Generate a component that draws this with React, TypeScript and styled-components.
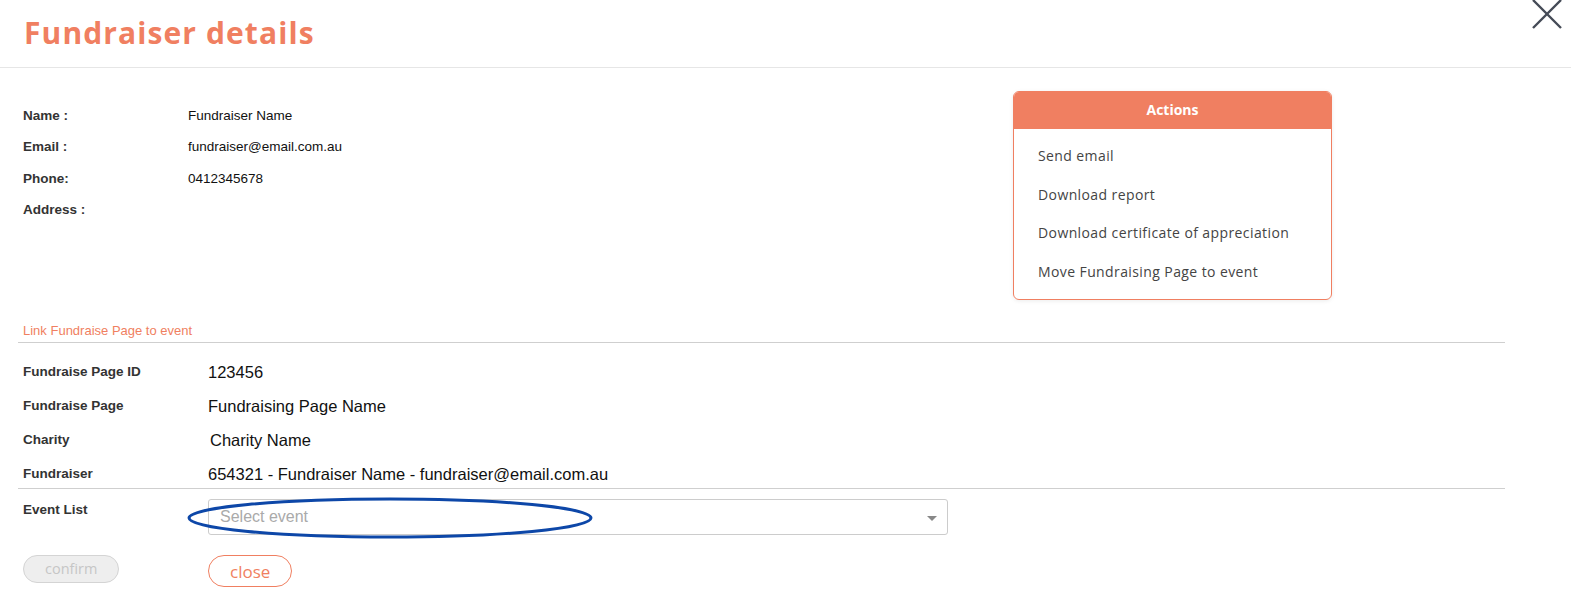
import React from 'react';
import styled, { createGlobalStyle } from 'styled-components';

const GlobalStyle = createGlobalStyle`
  body {
    margin: 0;
    background: #fff;
    font-family: 'Liberation Sans', Arial, sans-serif;
  }
`;

const Modal = styled.div`
  position: relative;
  width: 1571px;
  height: 611px;
  overflow: hidden;
  background: #fff;
`;

const Header = styled.div`
  height: 68px;
  border-bottom: 1px solid #e6e6e6;
  display: flex;
  align-items: center;
  padding-left: 24px;
  box-sizing: border-box;
`;

const Title = styled.h1`
  margin: 0;
  margin-top: -3px;
  font-family: 'Open Sans', sans-serif;
  font-size: 30px;
  font-weight: 700;
  color: #f07f61;
  letter-spacing: 1.1px;
`;

const CloseX = styled.button`
  position: absolute;
  top: -1px;
  right: 8px;
  width: 32px;
  height: 30px;
  border: none;
  background: none;
  padding: 0;
  cursor: pointer;
`;

const Body = styled.div`
  padding: 0 66px 0 18px;
`;

const TopArea = styled.div`
  display: flex;
  justify-content: space-between;
  padding-top: 22px;
  height: 255px;
  box-sizing: border-box;
`;

const InfoList = styled.div`
  display: grid;
  grid-template-columns: 165px auto;
  grid-auto-rows: 31.3px;
  padding: 18px 0 0 5px;
  align-content: start;
`;

const InfoLabel = styled.div`
  font-size: 13.5px;
  font-weight: 700;
  color: #333;
`;

const InfoValue = styled.div`
  font-size: 13.5px;
  color: #111;
`;

const ActionsCard = styled.div`
  width: 319px;
  height: 209px;
  margin-right: 173px;
  margin-top: 1px;
  border: 1px solid #f07f61;
  border-radius: 6px;
  box-sizing: border-box;
  overflow: hidden;
  box-shadow: 0 1px 4px rgba(0, 0, 0, 0.08);
`;

const ActionsHead = styled.div`
  height: 37px;
  padding-bottom: 3px;
  box-sizing: border-box;
  background: #f07f61;
  color: #fff;
  font-family: 'Open Sans', sans-serif;
  font-size: 14px;
  font-weight: 700;
  display: flex;
  align-items: center;
  justify-content: center;
`;

const ActionsList = styled.div`
  display: flex;
  flex-direction: column;
  padding: 17px 0 0 24px;
  gap: 18.5px;
`;

const ActionItem = styled.div`
  font-family: 'Open Sans', sans-serif;
  font-size: 14px;
  letter-spacing: 0.4px;
  color: #444;
  line-height: 20px;
  cursor: pointer;
`;

const SectionTitle = styled.div`
  font-size: 13px;
  color: #f07f61;
  padding: 0 0 4px 5px;
  border-bottom: 1px solid #cfcfcf;
`;

const LinkRows = styled.div`
  display: grid;
  grid-template-columns: 185px auto;
  grid-auto-rows: 34px;
  padding: 18px 0 0 5px;
  border-bottom: 1px solid #cfcfcf;
  height: 146px;
  box-sizing: border-box;
`;

const RowLabel = styled.div`
  font-size: 13.5px;
  font-weight: 700;
  color: #333;
  padding-top: 3px;
`;

const RowValue = styled.div<{ shift?: number }>`
  font-size: 16.5px;
  color: #111;
  padding-top: 2px;
  margin-left: ${({ shift }) => shift || 0}px;
`;

const EventRow = styled.div`
  display: grid;
  grid-template-columns: 185px 740px;
  padding: 10px 0 0 5px;
`;

const SelectBox = styled.div`
  position: relative;
  height: 36px;
  border: 1px solid #ccc;
  border-radius: 3px;
  box-sizing: border-box;
  display: flex;
  align-items: center;
  justify-content: space-between;
  padding: 0 10px 0 11px;
`;

const Placeholder = styled.span`
  font-size: 16px;
  color: #aaa;
`;

const Caret = styled.span`
  width: 0;
  height: 0;
  border-left: 5px solid transparent;
  border-right: 5px solid transparent;
  border-top: 5px solid #888;
  margin-top: 2px;
`;

const Annotation = styled.svg`
  position: absolute;
  left: -22px;
  top: -3px;
  pointer-events: none;
`;

const Buttons = styled.div`
  display: grid;
  grid-template-columns: 185px auto;
  padding: 20px 0 0 5px;
  align-items: start;
`;

const PillButton = styled.button<{ variant: 'disabled' | 'outline' }>`
  height: ${({ variant }) => (variant === 'disabled' ? 28 : 32)}px;
  padding: 0 21px;
  border-radius: 16px;
  font-family: 'Open Sans', sans-serif;
  font-size: ${({ variant }) => (variant === 'disabled' ? 14.5 : 17)}px;
  border: 1px solid ${({ variant }) => (variant === 'disabled' ? '#d4d4d4' : '#f07f61')};
  background: ${({ variant }) => (variant === 'disabled' ? '#eeeeee' : '#fff')};
  color: ${({ variant }) => (variant === 'disabled' ? '#c6c6c6' : '#f07f61')};
  justify-self: start;
  line-height: 1;
`;

const info = [
  ['Name :', 'Fundraiser Name'],
  ['Email :', 'fundraiser@email.com.au'],
  ['Phone:', '0412345678'],
  ['Address :', ''],
];

const actions = [
  'Send email',
  'Download report',
  'Download certificate of appreciation',
  'Move Fundraising Page to event',
];

const linkRows: [string, string, number][] = [
  ['Fundraise Page ID', '123456', 0],
  ['Fundraise Page', 'Fundraising Page Name', 0],
  ['Charity', 'Charity Name', 2],
  ['Fundraiser', '654321 - Fundraiser Name - fundraiser@email.com.au', 0],
];

export default function App() {
  return (
    <Modal>
      <GlobalStyle />
      <Header>
        <Title>Fundraiser details</Title>
      </Header>
      <CloseX aria-label="close">
        <svg width="32" height="30" viewBox="0 0 32 30">
          <path d="M2 1 L30 29 M30 1 L2 29" stroke="#454b57" strokeWidth="2.4" fill="none" />
        </svg>
      </CloseX>
      <Body>
        <TopArea>
          <InfoList>
            {info.map(([l, v]) => (
              <React.Fragment key={l}>
                <InfoLabel>{l}</InfoLabel>
                <InfoValue>{v}</InfoValue>
              </React.Fragment>
            ))}
          </InfoList>
          <ActionsCard>
            <ActionsHead>Actions</ActionsHead>
            <ActionsList>
              {actions.map((a) => (
                <ActionItem key={a}>{a}</ActionItem>
              ))}
            </ActionsList>
          </ActionsCard>
        </TopArea>
        <SectionTitle>Link Fundraise Page to event</SectionTitle>
        <LinkRows>
          {linkRows.map(([l, v, s]) => (
            <React.Fragment key={l}>
              <RowLabel>{l}</RowLabel>
              <RowValue shift={s}>{v}</RowValue>
            </React.Fragment>
          ))}
        </LinkRows>
        <EventRow>
          <RowLabel>Event List</RowLabel>
          <SelectBox>
            <Placeholder>Select event</Placeholder>
            <Caret />
            <Annotation width="410" height="46" viewBox="0 0 410 46">
              <ellipse cx="203" cy="21" rx="201" ry="19" fill="none" stroke="#0d47a8" strokeWidth="3" />
            </Annotation>
          </SelectBox>
        </EventRow>
        <Buttons>
          <PillButton variant="disabled">confirm</PillButton>
          <PillButton variant="outline">close</PillButton>
        </Buttons>
      </Body>
    </Modal>
  );
}
